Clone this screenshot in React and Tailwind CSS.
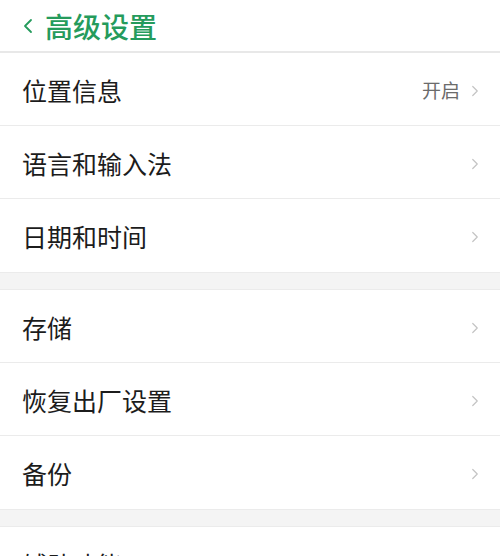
import { ChevronLeft, ChevronRight } from "lucide-react";

const groups = [
  [
    { label: "位置信息", value: "开启" },
    { label: "语言和输入法" },
    { label: "日期和时间" },
  ],
  [{ label: "存储" }, { label: "恢复出厂设置" }, { label: "备份" }],
  [{ label: "辅助功能" }],
];

const Row = ({ label, value, last }) => (
  <div
    className={`flex h-[73px] items-center justify-between pl-[22px] pr-[16px] pt-[3px] ${
      last ? "" : "border-b border-[#ebebeb]"
    }`}
  >
    <span className="text-[25px] text-[#1c1c1c]">{label}</span>
    <div className="flex items-center gap-[6px]">
      {value && <span className="text-[19px] text-[#6b6b6b]">{value}</span>}
      <ChevronRight size={18} strokeWidth={1.6} className="text-[#c4c4c4]" />
    </div>
  </div>
);

export default function App() {
  return (
    <div
      className="h-[556px] w-[500px] overflow-hidden bg-white"
      style={{ fontFamily: '"Noto Sans CJK SC", "Noto Sans", sans-serif' }}
    >
      <div className="flex h-[53px] items-center gap-[5px] border-b-2 border-[#e8e8e8] pl-[16px] pt-[1px]">
        <ChevronLeft size={24} strokeWidth={1.8} className="text-[#259b5c]" />
        <span className="text-[28px] font-medium text-[#259b5c]">高级设置</span>
      </div>
      {groups.map((rows, gi) => (
        <div key={gi}>
          {gi > 0 && (
            <div className="h-[18px] border-y border-[#ebebeb] bg-[#f4f4f4]" />
          )}
          {rows.map((r, i) => (
            <Row key={r.label} {...r} last={i === rows.length - 1} />
          ))}
        </div>
      ))}
    </div>
  );
}
